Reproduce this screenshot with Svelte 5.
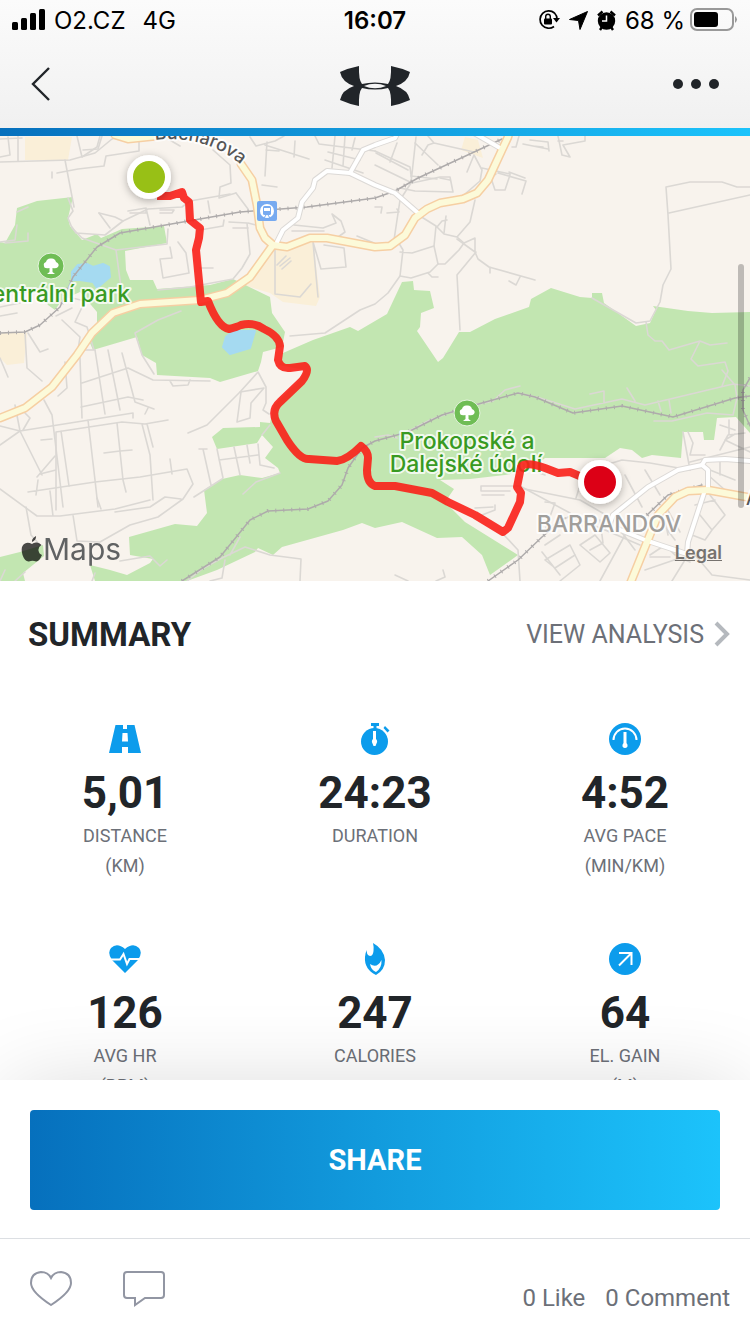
<script lang="ts">
    const metrics = [
        { icon: "road", value: "5,01", label: "DISTANCE", unit: "(KM)" },
        { icon: "watch", value: "24:23", label: "DURATION", unit: "" },
        { icon: "gauge", value: "4:52", label: "AVG PACE", unit: "(MIN/KM)" },
        { icon: "heart", value: "126", label: "AVG HR", unit: "(BPM)" },
        { icon: "flame", value: "247", label: "CALORIES", unit: "" },
        { icon: "arrow", value: "64", label: "EL. GAIN", unit: "(M)" }
    ];

    const parks = [
        "M0 242L5 243L15 225L17 208L37 201L73 197L68 218L70 226L82 240L97 234L101 238L122 229L164 226L167 243L125 251L126 270L130 280L153 280L157 289L210 285L233 279L270 297L272 313L285 332L282 347L263 352L261 362L258 371L220 382L210 378L157 375L156 363L142 355L137 337L93 350L90 343L97 327L97 312L80 292L62 300L55 310L48 305L40 293L0 293Z",
        "M283 353L313 340L350 327L358 331L387 314L402 282L413 281L414 290L430 291L434 308L421 313L420 327L417 331L438 362L443 358L459 332L470 332L495 319L529 307L531 299L551 288L580 297L592 298L592 293L602 293L604 303L636 326L650 323L656 310L653 306L688 311L712 313L750 312L750 433L736 417L717 418L714 440L704 440L703 432L683 432L681 458L652 455L642 458L632 450L620 448L605 458L545 458L530 470L505 475L470 479L440 480L454 489L445 502L465 522L518 555L490 575L482 555L462 537L437 538L402 522L375 528L362 523L343 530L282 547L273 555L258 548L255 552L217 570L187 581L95 581L90 565L110 570L127 575L150 563L153 559L130 555L129 537L175 524L197 526L207 513L204 490L222 479L240 475L262 478L280 473L278 468L265 458L273 447L262 435L257 443L217 449L212 437L223 428L260 427L260 422L270 423L274 405L300 380L305 370L279 365Z",
        "M0 557L20 552L43 545L44 556L23 573L25 581L0 581Z"
    ];

    const blocks = [
        "M25 137H72L68 160H25Z",
        "M243 285L275 250L313 242L320 297L316 306L283 302L270 293Z",
        "M0 333L27 333L24 363L7 365L0 358Z",
        "M465 137L478 140L483 158L461 150Z"
    ];

    const lakes = [
        "M78 265L87 264L93 267L103 264L109 267L110 277L97 288L93 282L80 280L72 280L72 272Z",
        "M233 331L255 331L250 348L230 354L223 347L226 337Z"
    ];

    const streets = [
        "M0 162L70 160L95 153L112 139L118 136", "M8 137L10 155L0 157", "M18 136V161M77 136L82 157L97 147L100 136", "M0 139L22 138",
        "M65 160L74 207", "M57 173L78 169L104 166L106 156L139 151V140L151 136", "M52 172V178M83 150L98 149L102 136",
        "M180 146L163 136M213 150L230 165L231 183L220 187L219 198L236 193", "M236 193L248 209",
        "M68 198L73 211L68 218L72 228L82 238L116 250L167 244L168 229", "M99 213L115 217L123 221L105 235L76 233L72 227",
        "M123 221L148 209L182 207L190 201L230 194", "M128 211L146 208V213H130M146 208L150 225M99 213L110 228",
        "M0 242L15 240L17 225M5 243L28 241V233M17 212L28 207",
        "M116 250L123 302M160 210H174L172 213H160M208 201L210 213",
        "M170 247L172 258L160 259L163 278L189 273L186 253L178 242M200 230L223 226L224 220M200 268H213",
        "M229 222L247 223L250 254L242 268L233 279L190 287L158 290", "M233 228H248M248 223L256 225",
        "M275 250V294L300 297L311 284M277 265L286 256M280 266L290 258M282 269L291 261",
        "M313 242L318 297M313 242L321 269L346 267L344 248L324 245",
        "M250 137L256 146L275 141L284 136M267 142L265 176M265 145L309 159M262 185L277 187M266 150L279 151M295 141L294 157",
        "M315 136L319 144L375 151M328 152L360 160M325 160L363 173M335 136L332 168M345 136L343 166M355 138L352 150",
        "M294 225L323 228L336 223L332 214L341 221L345 232L334 240L322 241M292 231H324M357 236L374 243",
        "M375 151L410 167L412 183L440 177H450L453 192L415 191L400 188M416 137L411 183L400 200L394 240",
        "M375 165L410 182M376 153L408 170M397 143L390 162M415 143L438 165M422 155L428 145L434 143L474 152M434 143L428 136",
        "M411 176L437 179M440 178L450 180M375 207H382L381 213M387 213L399 212L397 209",
        "M474 155L467 172M474 155L482 170L480 181L465 194M482 168L510 174M496 174L491 178L495 190L505 190L510 175M498 173L526 181L522 194M509 172L525 178",
        "M512 147L516 147L519 136M523 144L548 149M530 140L548 142L549 151M533 146L543 147M558 136L562 155L570 157L563 145L585 141V136M558 141H563",
        "M475 200L470 222L457 237L444 234L436 226L420 216M436 226L434 246L438 264L445 264L459 250L464 243L457 237",
        "M434 246L412 253L400 252M397 240L403 250L400 276L411 278L430 272L438 264M428 273L432 277H438",
        "M400 276L388 293L375 304L360 310L325 333L290 336M464 243L475 238V252L457 239M475 252L478 259L489 267L535 280M490 267V273M509 281L516 285L520 277",
        "M476 252L457 275L460 330M444 233L446 216M437 227L442 221L447 220",
        "M666 187L690 182H722L737 187L750 187M666 187L668 215L671 269L663 285L660 302L650 321L636 323L592 298M669 213L750 195",
        "M646 322L648 335L655 341L662 341L669 350L700 341L691 359L698 366L725 362L728 371L722 386M700 341L710 345L727 343",
        "M375 437L388 435L397 438M405 433L430 420L465 407L493 401L505 390L520 386M518 393L540 398L575 409L622 399L645 405L733 384L750 386M590 394L604 391V403M627 388L635 401M658 401L661 411M669 400L671 413M654 421H672L707 413L733 415L737 398L735 385L722 370",
        "M135 333L158 320L181 311M135 333L142 355L154 374M0 358L8 377M25 333L27 368L42 381M56 316L72 308M95 350L78 350L80 337L62 320M68 297L85 301L75 322L87 327L94 350M0 307L20 303M17 313L0 316M28 333L40 352L48 349",
        "M65 362L67 388L58 396M44 400L52 415L63 507M80 358L82 418M95 350L105 414M108 350L120 410M122 353L135 402L154 409M82 383L128 368L153 380L210 381M81 407L128 397L143 400M170 381L173 386L188 385L190 380M148 408L145 414",
        "M0 426L20 431L133 413V418M56 432L122 422L145 424L168 420M15 405L20 431L42 475M0 445L20 431M25 413L30 418L23 430M40 474L56 470M56 432V510M61 431L69 486M88 420L95 480L98 507M117 423L123 480L126 492M142 424L150 455L153 500M147 424L153 447",
        "M28 492L95 482L140 477L187 469L193 484L183 499L158 517L130 525L100 542L77 541L73 515M38 480L36 495M50 491L53 516M0 489L37 516L60 516L115 509L150 500M115 512L150 507L165 497L181 499",
        "M104 453L120 451L132 450M97 498L101 509M37 477L55 456M41 440L52 439M26 507L31 535L40 545M170 459L172 474M188 433L207 425L240 392L258 372L266 387V403L263 410L269 414",
        "M240 392L264 388L251 403L250 418L237 422L241 392M222 479L194 497M217 449L223 478M234 447L240 475M247 445L250 463M219 460L258 455M199 449L207 449M203 449L211 485M258 444L260 465L274 468M262 435L270 425M280 473L256 482L243 494",
        "M187 581L202 569L222 558L245 547L270 555L301 559L300 581M230 555L240 537M120 561L150 556L160 566L167 560M225 560L222 578L210 581",
        "M482 495H504M481 486H520L570 513M481 486V491H510M495 505V510L482 515M475 508L493 507M504 535L518 550L520 581",
        "M545 502L555 503L545 530L570 516M570 516L605 530L640 545M520 488L580 500L606 515M583 476L576 498M589 470L622 460L650 463L690 470",
        "M545 545L560 535M542 552L560 575M545 560L570 545L575 555L555 568ZM580 545L595 535L610 553L600 562L580 545M600 520L603 543L590 550M625 475L642 507M645 470L660 495",
        "M560 581L580 565L575 555M625 535L600 581M645 570L680 558L690 562M695 555L712 575L750 580M688 555L672 581",
        "M660 520L675 540M665 505L680 532M650 525L665 520L668 535M700 515L712 530L705 540L692 535M710 495L725 515L712 530M695 505L715 500M650 555L665 545L675 555M650 557H670",
        "M690 470L683 432M688 432L693 443L690 455L705 455M720 425L735 430M729 420V435M720 450L728 435L745 433M735 434L725 440L750 452M690 462L750 447M708 475L725 490M710 470L735 480M620 530L635 550M525 468L545 475M720 460V475",
        "M0 581L5 570M15 581L25 572M92 581L95 573M436 581L445 577L443 570M395 575L408 581"
    ];

    const avenues = [
        "M0 418L25 408L52 387L77 355L92 333L113 313L140 304L200 300L227 293L250 277L273 245",
        "M241 164L252 180L257 205L260 228L265 238L273 245L287 247L310 238L327 238L375 247L390 246L405 235L415 218L427 209L440 203L463 199L477 193L488 180L508 137L510 130",
        "M115 135L128 139L157 136",
        "M630 584L647 542L658 515L675 497L688 491L708 490L752 498"
    ];

    const roads = [
        "M277 242L283 230L298 218L302 202L313 188L315 180L327 171L350 173L375 185L395 193L418 213",
        "M350 173L363 150L375 145L395 138L398 132",
        "M474 133L500 148",
        "M608 528L613 515L648 487L678 470L702 465L708 470L708 490",
        "M702 465L705 460L725 459L750 461",
        "M618 529L645 540L687 554L688 542L705 490"
    ];

    const rails = [
        "M182 581L220 557L250 520L268 511L308 509L328 501L342 485L348 468L362 448L375 441L408 432L442 415L482 403L518 393L535 397L573 413L622 406L673 417L735 398L750 396",
        "M0 333L25 332L40 325L60 307L73 277L97 247L120 233L177 223L240 212L307 207L375 198L395 191L418 178L472 153L502 139",
        "M488 581L518 560L542 537L565 518M647 515L668 495L702 485",
        "M750 378L743 390V410L750 426"
    ];

    const route = "M157 196L170 196L182 192L184 198L189 202L190 220L200 228L199 238L196 250L201 302L208 301Q218 327 229 329Q237 327 241 325Q254 322 264 329Q279 336 280 346L278 360Q280 369 290 368L305 366Q310 370 302 381L280 402Q271 410 276 421L287 440Q300 460 309 459L337 461Q347 460 361 446Q368 451 368 458L367 470Q367 483 375 486L395 486L432 493L448 502L475 515L503 532L508 528L520 502L521 493L517 487L521 467Q525 461 545 468L558 473L570 472L582 477";
</script>

<div class="app">
    <header>
        <div class="status">
            <div class="carrier">
                <svg width="33" height="22" viewBox="0 0 33 22"><rect y="13" width="6" height="8" rx="1.5" /><rect x="9" y="9" width="6" height="12" rx="1.5" /><rect x="18" y="4" width="6" height="17" rx="1.5" /><rect x="27" width="6" height="21" rx="1.5" /></svg>
                <span>O2.CZ</span>
                <span class="network">4G</span>
            </div>
            <time>16:07</time>
            <div class="indicators">
                <svg width="22" height="22" viewBox="0 0 22 22">
                    <path d="M16.5 4A8.7 8.7 0 1 0 16 17.5M16.5 4A8.7 8.7 0 0 1 19 10" fill="none" stroke="#000" stroke-width="1.7" />
                    <path d="M15 9H22L18.500 13.500Z" />
                    <rect x="6" y="9.500" width="8" height="6" rx="1" />
                    <path d="M7.700 10V7.500a2.300 2.300 0 0 1 4.600 0V10" fill="none" stroke="#000" stroke-width="1.4" />
                </svg>
                <svg width="19" height="19" viewBox="0 0 19 19"><path d="M18.500 .5L11 18.500L9.500 9.500L.5 8.500Z" stroke="#000" stroke-linejoin="round" /></svg>
                <svg width="19" height="21" viewBox="0 0 19 21">
                    <circle cx="9.500" cy="11" r="8.700" />
                    <path d="M1 5.500L5.500 1.500M18 5.500L13.500 1.500M3 20L5 17M16 20L14 17" stroke="#000" stroke-width="2.4" />
                    <path d="M9.500 5.500V11H5" fill="none" stroke="#fff" stroke-width="1.5" />
                </svg>
                <span>68 %</span>
                <svg class="battery" width="48" height="24" viewBox="0 0 48 24">
                    <rect x="1" y="1" width="42" height="21" rx="6" fill="none" stroke="#999" stroke-width="2" />
                    <rect x="4" y="4" width="24" height="15" rx="3" />
                    <path d="M45 8q4 3.500 0 7z" fill="#999" />
                </svg>
            </div>
        </div>
        <nav>
            <button class="back" aria-label="Back">
                <svg width="20" height="36" viewBox="0 0 20 36"><path d="M18 2L2 18L18 34" fill="none" stroke="#212529" stroke-width="2.4" /></svg>
            </button>
            <svg width="70" height="44" viewBox="0 0 70 44" fill="#212529" role="img" aria-label="Under Armour">
                <path d="M0 10Q9 6 19 4Q18.500 18 22 22Q28 20.500 35 20.500Q42 20.500 48 22Q51.500 18 51 4Q61 6 70 10Q68 20 56 24Q68 28 70 38Q61 42 51 44Q51.500 30 48 26Q42 27.500 35 27.500Q28 27.500 22 26Q18.500 30 19 44Q9 42 0 38Q2 28 14 24Q2 20 0 10Z" />
                <path d="M24 24Q29 21.700 35 21.700Q41 21.700 46 24Q41 26.300 35 26.300Q29 26.300 24 24Z" fill="#f5f5f5" />
            </svg>
            <button class="more" aria-label="More">
                <svg width="46" height="10" viewBox="0 0 46 10" fill="#212529"><circle cx="5" cy="5" r="5" /><circle cx="23" cy="5" r="5" /><circle cx="41" cy="5" r="5" /></svg>
            </button>
        </nav>
    </header>

    <main>
        <section class="map">
            <svg viewBox="0 136 750 445" preserveAspectRatio="xMidYMid slice">
                <defs>
                    <path id="bend" d="M155 140Q208 134 246 169" />
                    <filter id="lift" x="-50%" y="-50%" width="200%" height="200%">
                        <feDropShadow dx="0" dy="2" stdDeviation="4" flood-opacity="0.3" />
                    </filter>
                </defs>
                <rect y="136" width="750" height="445" fill="#f8f3ed" />
                {#each blocks as d}<path {d} fill="#faefd8" />{/each}
                {#each parks as d}<path {d} fill="#c2e6b1" />{/each}
                {#each lakes as d}<path {d} fill="#a5daf1" stroke="#a5daf1" stroke-width="2" stroke-linejoin="round" />{/each}
                <g class="lines">
                    {#each streets as d}<path {d} stroke="#dbd8d4" stroke-width="1.6" />{/each}
                    {#each rails as d}
                        <path {d} stroke="#aeabab" stroke-width="1.5" />
                        <path {d} stroke="#aeabab" stroke-width="4" stroke-dasharray="1 7" stroke-linecap="butt" />
                    {/each}
                    {#each roads as d}<path {d} stroke="#dcd9d6" stroke-width="6" />{/each}
                    {#each avenues as d}<path {d} stroke="#f6cfa3" stroke-width="9" />{/each}
                    {#each roads as d}<path {d} stroke="#fff" stroke-width="4" />{/each}
                    {#each avenues as d}<path {d} stroke="#fcfad9" stroke-width="6" />{/each}
                </g>

                <g class="station">
                    <rect x="257" y="201" width="20" height="20" rx="2" fill="#77aaf0" />
                    <circle cx="267" cy="211" r="7" fill="#fff" />
                    <rect x="263" y="206" width="8" height="9" rx="1.500" fill="#77aaf0" />
                    <rect x="264" y="208" width="6" height="3" fill="#fff" />
                    <path d="M264 218L266 215M270 218L268 215" stroke="#77aaf0" />
                </g>
                {#each [[51, 266], [467, 413]] as [x, y]}
                    <g transform="translate({x} {y})">
                        <circle r="13" fill="#6fbd55" stroke="#e6f4df" />
                        <path d="M-1.500 2Q-7 3-7 0Q-8-3-5-4Q-4-8 0-7.500Q4-8 5-4Q9-2 7 1Q5 3 1.500 2V6L4 8H-4L-1.500 6Z" fill="#fff" />
                    </g>
                {/each}

                <g class="labels">
                    <text class="street"><textPath href="#bend">Bucharova</textPath></text>
                    <text class="park" x="130" y="302" text-anchor="end">Centrální park</text>
                    <text class="park" x="467" y="449" text-anchor="middle">Prokopské a</text>
                    <text class="park" x="466" y="472" text-anchor="middle">Dalejské údolí</text>
                    <text class="district" x="609" y="532" text-anchor="middle">BARRANDOV</text>
                    <text class="street" x="746" y="505">Augustinova</text>
                </g>
                <path d={route} fill="none" stroke="#fa2018" stroke-width="8" stroke-linejoin="round" stroke-opacity="0.9" />
                <g stroke="#fff" stroke-width="6" filter="url(#lift)">
                    <circle cx="149" cy="177" r="19" fill="#98c013" />
                    <circle cx="600" cy="482" r="19" fill="#dc0019" />
                </g>
            </svg>
            <div class="maps-brand">
                <svg width="22" height="26" viewBox="0 0 22 26"><path d="M15 0Q15.500 4 11 6Q10.500 2.500 15 0ZM11 8Q13 6 16 6.500Q19 7 20.500 9Q17 11 17.500 14.500Q18 18 21 19Q18 26 15 25.500Q11.500 24 8 25.500Q4 26 1.500 19Q-1 10 4 7.500Q7 6 11 8Z" /></svg>
                <span>Maps</span>
            </div>
            <a class="legal" href="#legal">Legal</a>
        </section>

        <section class="summary">
            <div class="heading">
                <h1>SUMMARY</h1>
                <a href="#analysis">
                    VIEW ANALYSIS
                    <svg width="16" height="26" viewBox="0 0 16 26"><path d="M2 2L13 13L2 24" fill="none" stroke="#b5b9be" stroke-width="4" /></svg>
                </a>
            </div>
            <div class="metrics">
                {#each metrics as metric}
                    <div class="metric">
                        <svg width="32" height="32" viewBox="0 0 32 32" fill="#0c9cec">
                            {#if metric.icon === "road"}
                                <path d="M6.500 2H14V6H18V2H25.500L32 30H19V24H13V30H0ZM13.500 10L13 18.500H19L18.500 10Z" fill-rule="evenodd" />
                            {:else if metric.icon === "watch"}
                                <circle cx="15.500" cy="18.500" r="13.500" />
                                <path d="M12 0H20V3H17.500V7H14.500V3H12ZM26 3L30.500 7.500L28.500 9.500L24.500 5Z" />
                                <path d="M14 8H17V16Q19 18 17.500 20.500L16.500 23H14.500L13.500 20.500Q12 18 14 16Z" fill="#fff" />
                            {:else if metric.icon === "gauge"}
                                <circle cx="16" cy="16" r="16" />
                                <path d="M4.500 17A11.500 11.500 0 0 1 27.500 17" fill="none" stroke="#fff" stroke-width="2" />
                                <path d="M14.500 9H17.500V20Q19 21.500 18.500 23.500Q17.500 25 16 25Q14.500 25 13.500 23.500Q13 21.500 14.500 20Z" fill="#fff" />
                            {:else if metric.icon === "heart"}
                                <path d="M16 30L3 17Q-2 10 2 5Q8-1 16 6Q24-1 30 5Q34 10 29 17Z" />
                                <path d="M0 16.500H11L14.500 11L18 21L20.500 16H32" fill="none" stroke="#fff" stroke-width="2" />
                            {:else if metric.icon === "flame"}
                                <path d="M14 0Q25 6 26 17Q26 27 17 32Q5 26 6 14Q6 10 8 7Q7 12 11 13Q14 13 14.500 8Q15 4 14 0Z" />
                                <path d="M11 21Q18 26 22.500 17Q23 25 17 29Q12 27 11 21Z" fill="#fff" />
                            {:else}
                                <circle cx="16" cy="16" r="16" />
                                <path d="M10 10H22.500V22M22 10.500L10 22.500" fill="none" stroke="#fff" stroke-width="2" />
                            {/if}
                        </svg>
                        <strong>{metric.value}</strong>
                        <span>{metric.label}</span>
                        <span>{metric.unit}</span>
                    </div>
                {/each}
            </div>
        </section>
    </main>
    <div class="scrollbar"></div>

    <footer>
        <div class="share">
            <button>SHARE</button>
        </div>
        <div class="social">
            <button aria-label="Like">
                <svg width="42" height="36" viewBox="0 0 42 36"><path d="M21 34Q1 21 1 12Q1 2 11 1Q18 1 21 7Q24 1 31 1Q41 2 41 12Q41 21 21 34Z" fill="none" stroke="#9296a3" stroke-width="2" /></svg>
            </button>
            <button aria-label="Comment">
                <svg width="42" height="36" viewBox="0 0 42 36"><path d="M4 1H38Q41 1 41 4V24Q41 27 38 27H22L12 34V27H4Q1 27 1 24V4Q1 1 4 1Z" fill="none" stroke="#9296a3" stroke-width="2" /></svg>
            </button>
            <p class="counts"><span>0 Like</span><span>0 Comment</span></p>
        </div>
    </footer>
</div>

<style>
    :global(body) {
        margin: 0;
    }

    .app {
        position: relative;
        display: flex;
        flex-direction: column;
        height: 100vh;
        background: #fff;
        color: #212529;
        font-family: Roboto, "Liberation Sans", sans-serif;
    }

    button {
        border: none;
        padding: 0;
        background: none;
        font-family: inherit;
        cursor: pointer;
    }

    svg {
        display: block;
        flex: none;
    }

    header {
        background: linear-gradient(#fbfbfb, #f0f0f0);
    }

    header::after {
        content: "";
        display: block;
        height: 8px;
        background: linear-gradient(90deg, #0670bd, #129bdd 50%, #1cc3fb);
    }

    .status {
        display: grid;
        grid-template-columns: 1fr auto 1fr;
        align-items: center;
        height: 40px;
        padding: 0 12px;
        color: #000;
        font-family: Inter, sans-serif;
        font-size: 24px;
    }

    .carrier, .indicators {
        display: flex;
        align-items: center;
        gap: 9px;
    }

    .indicators {
        justify-content: flex-end;
    }

    .network {
        margin-left: 8px;
    }

    .battery {
        margin-left: -4px;
    }

    time {
        font-weight: 600;
    }

    nav {
        display: grid;
        grid-template-columns: 1fr auto 1fr;
        align-items: center;
        height: 88px;
        padding: 0 31px;
    }

    .more {
        justify-self: end;
    }

    main {
        flex: 1;
        min-height: 0;
        overflow-y: auto;
        scrollbar-width: none;
    }

    .map {
        position: relative;
        overflow: hidden;
    }

    .map > svg {
        width: 100%;
    }

    .lines {
        fill: none;
        stroke-linejoin: round;
        stroke-linecap: round;
    }

    .labels {
        font-family: Inter, sans-serif;
        font-weight: 500;
        paint-order: stroke;
        stroke: #fffc;
        stroke-width: 4px;
        stroke-linejoin: round;
    }

    .street {
        fill: #555;
        font-size: 18px;
    }

    .park {
        fill: #389a22;
        font-size: 23px;
    }

    .district {
        fill: #a09e9b;
        font-size: 23px;
    }

    .maps-brand {
        position: absolute;
        left: 21px;
        bottom: 14px;
        display: flex;
        align-items: center;
        opacity: 0.7;
        font-family: Inter, sans-serif;
        font-size: 30px;
    }

    .legal {
        position: absolute;
        right: 28px;
        bottom: 18px;
        color: #77736f;
        font-family: Inter, sans-serif;
        font-size: 18px;
        font-weight: 600;
    }

    .scrollbar {
        position: absolute;
        top: 264px;
        right: 6px;
        width: 6px;
        height: 244px;
        border-radius: 3px;
        background: #0000003b;
    }

    .heading {
        display: flex;
        justify-content: space-between;
        align-items: center;
        height: 106px;
        padding: 0 20px 0 28px;
    }

    h1 {
        margin: 0;
        font-size: 33px;
        font-weight: 700;
    }

    .heading a {
        display: flex;
        align-items: center;
        gap: 10px;
        color: #6c7078;
        font-size: 25px;
        text-decoration: none;
    }

    .metrics {
        display: grid;
        grid-template-columns: repeat(3, 1fr);
        padding-top: 36px;
    }

    .metric {
        display: flex;
        flex-direction: column;
        align-items: center;
        height: 220px;
    }

    .metric strong {
        margin: 12px 0 2px;
        font-size: 44px;
        font-weight: 700;
        line-height: 52px;
    }

    .metric span {
        color: #6c7078;
        font-size: 18px;
        line-height: 30px;
    }

    footer {
        position: relative;
        background: #fff;
        box-shadow: 0 0 90px -10px #00000029;
    }

    .share {
        padding: 30px 30px 28px;
        border-bottom: 1px solid #dcdfe3;
    }

    .share button {
        width: 100%;
        height: 100px;
        border-radius: 4px;
        background: linear-gradient(90deg, #0670bd, #129bdd 50%, #1cc3fb);
        color: #fff;
        font-size: 29px;
        font-weight: 700;
    }

    .social {
        display: flex;
        align-items: center;
        gap: 51px;
        box-sizing: border-box;
        height: 95px;
        padding: 4px 20px 0 30px;
        color: #6c7078;
    }

    .counts {
        display: flex;
        gap: 20px;
        margin: 18px 0 0 auto;
        font-size: 24px;
    }
</style>
